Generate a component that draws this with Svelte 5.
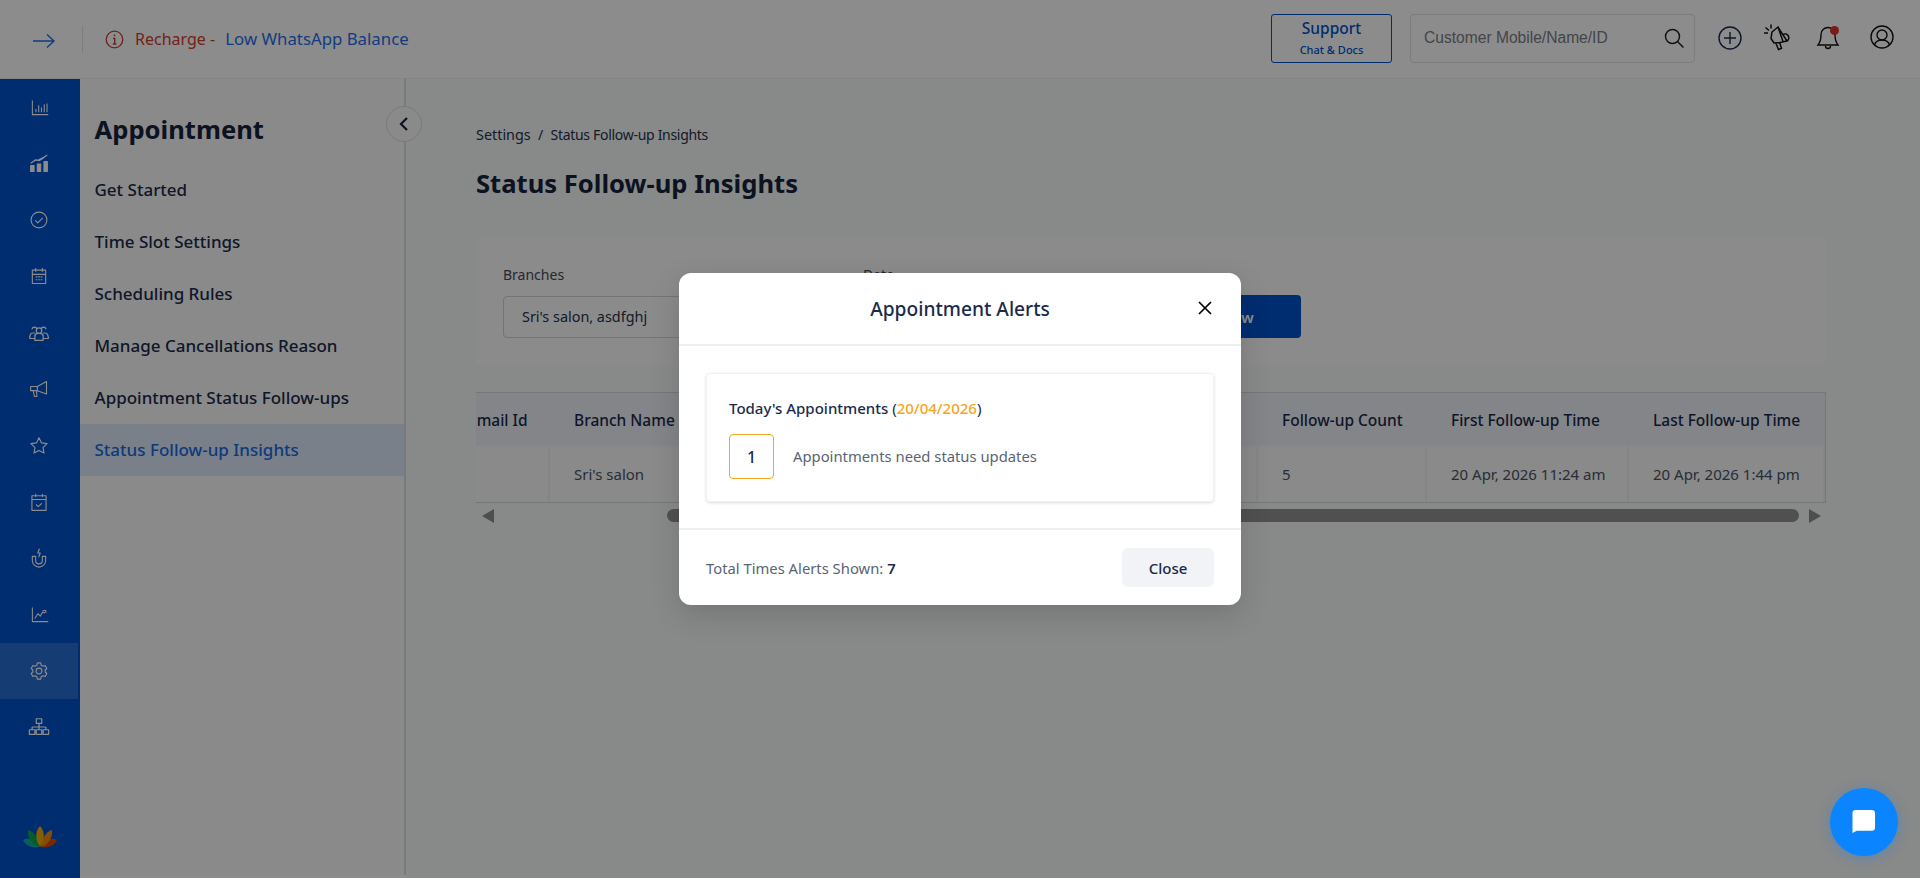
<script>
  const menu = ['Get Started','Time Slot Settings','Scheduling Rules','Manage Cancellations Reason','Appointment Status Follow-ups','Status Follow-up Insights'];
  const rail = [
    {s:19,d:'M3 3v18h20M7.500 18v-4M11 18V9M14.500 18v-6M18 18V8M21.500 18V7'},
    {s:20,d:'M2 11l6-4 4 1 5-3 5-4M2 21v-7h4v7zM10 21v-9h4v9zM18 21V9h4v12z',fill:true},
    {s:20,d:'M12 2.500a9.500 9.500 0 1 0 0 19a9.500 9.500 0 1 0 0-19zM7.500 12.500l3 3 6-6'},
    {s:20,d:'M4 5h16v16H4zM4 10h16M8 2.500V7M16 2.500V7M8 13h2M11 13h2M14 13h2M8 16.500h2M11 16.500h2M14 16.500h2'},
    {s:22,d:'M9 9.500a3 3 0 1 0 6 0a3 3 0 1 0-6 0M7.500 20v-4.500q0-2.500 3-3h3q3 .5 3 3V20zM4.500 8a2.500 2.500 0 0 1 5 0M1.500 18l1-4q.5-2 3-2h2M14.500 8a2.500 2.500 0 0 1 5 0M22.500 18l-1-4q-.5-2-3-2h-2M1.500 18h6M16.500 18h6'},
    {s:20,d:'M2 9h8l11-6v15l-11-4H2zM10 9v5M5 14l1.500 7h3L9 14'},
    {s:20,d:'M12 2l3 6.300 6.700.9-4.900 4.700 1.200 6.600L12 17.400 6 20.500l1.200-6.600-4.900-4.700 6.700-.9z'},
    {s:20,d:'M3.500 4.500h17V22h-17zM3.500 9h17M8 2v4M16 2v4M8.500 15l2.500 2.500 4.500-4'},
    {s:20,d:'M4 10v5a8 8 0 0 0 16 0v-5h-4v5a4 4 0 0 1-8 0v-5zM12.500 1l-2 5h3l-2 5'},
    {s:19,d:'M3 3v18h20M6 17l4-6 3 3 3-5 3 1M16 7h4v3'},
    {s:20,on:true,d:'M12 8.500a3.500 3.500 0 1 0 0 7a3.500 3.500 0 1 0 0-7zM10 2.300h4l.6 2.700 2.200 1.300 2.600-.8 2 3.500-2 1.800v2.400l2 1.800-2 3.500-2.600-.8-2.200 1.300-.6 2.700h-4l-.6-2.700-2.200-1.300-2.600.8-2-3.500 2-1.800v-2.400l-2-1.800 2-3.500 2.600.8 2.200-1.300z'},
    {s:22,d:'M9 3h6v5H9zM12 8v4M4.500 12h15M4.500 12v3M12 12v3M19.500 12v3M1.500 15h6v5h-6zM9 15h6v5H9zM16.500 15h6v5h-6z'}
  ];
</script>

<div class="page">
  <header class="top">
    <button class="arrow" aria-label="Expand">
      <svg width="24" height="16" viewBox="0 0 24 16"><path d="M1 8h21M15 1.500l7 6.500-7 6.500" fill="none" stroke="#1f6fe0" stroke-width="1.400"/></svg>
    </button>
    <span class="sep"></span>
    <svg class="info" width="19" height="19" viewBox="0 0 19 19"><circle cx="9.500" cy="9.500" r="8.300" fill="none" stroke="#c4432f" stroke-width="1.300"/><path d="M9.500 4.500v1.800M8 8.500h1.700V14M7.800 14h3.600" fill="none" stroke="#c4432f" stroke-width="1.400"/></svg>
    <p class="recharge"><span class="red">Recharge&nbsp;-&nbsp;</span><span class="blue">Low WhatsApp Balance</span></p>
    <div class="top-right">
      <button class="support"><b>Support</b><small>Chat &amp; Docs</small></button>
      <div class="search">
        <span>Customer Mobile/Name/ID</span>
        <svg width="22" height="22" viewBox="0 0 22 22"><circle cx="9.500" cy="9.500" r="7" fill="none" stroke="#222" stroke-width="1.500"/><path d="M14.500 14.500l6 6" stroke="#222" stroke-width="1.500"/></svg>
      </div>
      <svg class="i-plus" width="24" height="24" viewBox="0 0 24 24"><circle cx="12" cy="12" r="11" fill="none" stroke="#1a2b4b" stroke-width="1.400"/><path d="M12 6v12M6 12h12" stroke="#1a2b4b" stroke-width="1.400"/></svg>
      <svg class="i-mega" width="28" height="28" viewBox="0 0 28 28"><g fill="none" stroke="#111" stroke-width="1.500"><path d="M9 8l6-5 9 14-7 1.500-6 .5-3-4.500zM15 3l5 14.500M13 19.500l2.500 6 3-1.200-2-6M20 10.500a3.800 3.800 0 0 1 4 6.500M1 9h4M2.500 3.500l3.500 3M8 0.500v4"/></g></svg>
      <span class="bell">
        <svg width="24" height="26" viewBox="0 0 24 26"><path d="M12 2.500a7 7 0 0 0-7 7c0 6-1 8-3 10.500h20c-2-2.500-3-4.500-3-10.500a7 7 0 0 0-7-7zM9.500 21a2.500 2.500 0 0 0 5 0" fill="none" stroke="#111" stroke-width="1.400"/></svg>
        <i></i>
      </span>
      <svg class="i-user" width="24" height="24" viewBox="0 0 24 24"><g fill="none" stroke="#111" stroke-width="1.400"><circle cx="12" cy="12" r="11"/><circle cx="12" cy="10" r="5"/><path d="M4.500 20c1-3.500 3.500-5 7.500-5s6.500 1.500 7.500 5"/></g></svg>
    </div>
  </header>

  <div class="main">
    <nav class="rail">
      {#each rail as r}
        <div class="rail-item" class:active={r.on}>
          <svg width={r.s} height={r.s} viewBox="0 0 24 24"><path d={r.d} fill={r.fill ? '#fff' : 'none'} stroke="#fff" stroke-width="1.350" stroke-linejoin="round"/></svg>
        </div>
      {/each}
      <svg class="lotus" width="34" height="22" viewBox="0 0 34 22">
        <path d="M0 14C6 11 12 14 16 21C8 22 3 20 0 14z" fill="#0fb0a8"/>
        <path d="M5 4C10 5 15 11 16 21C9 19 4 12 5 4z" fill="#0aa850"/>
        <path d="M34 14C28 11 22 14 18 21C26 22 31 20 34 14z" fill="#e0480a"/>
        <path d="M29 4C24 5 19 11 18 21C25 19 30 12 29 4z" fill="#f08a10"/>
        <path d="M17 0C12 5 12 14 17 21C22 14 22 5 17 0z" fill="#f5b000"/>
      </svg>
    </nav>

    <aside class="panel">
      <h2>Appointment</h2>
      <ul>
        {#each menu as m, i}
          <li class:on={i === 5}>{m}</li>
        {/each}
      </ul>
      <button class="collapse" aria-label="Collapse">
        <svg width="12" height="16" viewBox="0 0 12 16"><path d="M9 2L3 8l6 6" fill="none" stroke="#16233b" stroke-width="2.200"/></svg>
      </button>
    </aside>

    <main class="content">
      <div class="crumb"><em>Settings</em>&nbsp; /&nbsp; <span>Status Follow-up Insights</span></div>
      <h1>Status Follow-up Insights</h1>
      <section class="filters">
        <div class="f f1"><span class="lab">Branches</span><div class="input">Sri's salon, asdfghj</div></div>
        <div class="f f2"><span class="lab">Date</span><div class="input"></div></div>
        <button class="show">Show</button>
      </section>
      <div class="tbl">
        <div class="grid">
          <div class="th">Email Id</div><div class="th">Branch Name</div><div class="th">Follow-up Count</div><div class="th">First Follow-up Time</div><div class="th">Last Follow-up Time</div>
          <div class="td"></div><div class="td">Sri's salon</div><div class="td">5</div><div class="td">20 Apr, 2026 11:24 am</div><div class="td">20 Apr, 2026 1:44 pm</div>
        </div>
      </div>
      <div class="sb">
        <i class="al"></i><span class="thumb"></span><i class="ar"></i>
      </div>
    </main>
  </div>

  <div class="backdrop">
    <div class="modal">
      <div class="m-head">
        <h3>Appointment Alerts</h3>
        <button class="x" aria-label="Close"><svg width="14" height="14" viewBox="0 0 14 14"><path d="M1 1l12 12M13 1L1 13" stroke="#000" stroke-width="1.700"/></svg></button>
      </div>
      <div class="m-body">
        <div class="m-card">
          <div class="today">Today's Appointments <span class="paren">(<span class="date">20/04/2026</span>)</span></div>
          <div class="need"><span class="count">1</span><span class="need-t">Appointments need status updates</span></div>
        </div>
      </div>
      <div class="m-foot">
        <span class="total">Total Times Alerts Shown: <b>7</b></span>
        <button class="close">Close</button>
      </div>
    </div>
  </div>

  <button class="chat" aria-label="Chat">
    <svg width="24" height="24" viewBox="0 0 24 24"><path d="M3.500 0h17Q24 0 24 3.500v15q0 3-3.500 3H5L.5 24V3.500Q.5 0 3.500 0z" fill="#fff" transform="scale(.96)"/></svg>
  </button>
</div>

<style>
  :global(body) { margin: 0; background: #fff; }
  .page { height: 878px; display: flex; flex-direction: column; font-family: "Noto Sans", sans-serif; color: #1a2b4b; overflow: hidden; position: relative; }
  button { font-family: inherit; border: 0; background: none; padding: 0; }
  p, h1, h2, h3, ul { margin: 0; padding: 0; }

  .top { height: 78px; flex: none; display: flex; align-items: center; border-bottom: 1px solid #eceff3; background: #fff; }
  .arrow { width: 24px; height: 16px; margin: 4px 0 0 32px; line-height: 0; }
  .sep { width: 1px; height: 27px; background: #e0e3e8; margin-left: 26px; }
  .info { margin-left: 22px; flex: none; }
  .recharge { margin-left: 11px; font-size: 16px; line-height: 22px; }
  .red { color: #d0402c; }
  .blue { color: #1f6fe8; font-size: 16.800px; margin-left: 6px; }
  .top-right { margin-left: auto; display: flex; align-items: center; height: 100%; padding-bottom: 2px; box-sizing: border-box; }
  .support { width: 121px; height: 49px; box-sizing: border-box; border: 1.500px solid #0052cc; border-radius: 3px; color: #0052cc; display: flex; flex-direction: column; align-items: center; justify-content: center; }
  .support b { font-size: 15.500px; font-weight: 500; line-height: 21px; }
  .support small { font-size: 11px; font-weight: 500; line-height: 16px; margin-top: 3px; }
  .search { width: 285px; height: 49px; box-sizing: border-box; margin-left: 18px; border: 1px solid #dfe2e6; border-radius: 4px; display: flex; align-items: center; justify-content: space-between; padding: 0 9px 0 13px; font-family: "Liberation Sans", sans-serif; font-size: 15.600px; color: #7b7f85; }
  .i-plus { margin-left: 23px; }
  .i-mega { margin-left: 21px; }
  .bell { position: relative; margin-left: 25px; height: 26px; line-height: 0; }
  .bell i { position: absolute; top: 1px; right: 1px; width: 9px; height: 9px; border-radius: 50%; background: #e0352b; }
  .i-user { margin: 0 26px 2px 30px; }

  .main { flex: 1; display: flex; min-height: 0; }
  .rail { width: 80px; flex: none; background: #0052cc; position: relative; display: flex; flex-direction: column; }
  .rail-item { display: flex; align-items: center; justify-content: center; width: 78px; height: 56.400px; flex: none; }
  .rail-item.active { background: rgba(255,255,255,.16); }
  .lotus { position: absolute; left: 23px; bottom: 30px; }

  .panel { width: 324px; flex: none; border-right: 2px solid #dcdfe4; position: relative; background: #fbfbfb; margin-bottom: 3px; }
  .panel h2 { font-size: 25.600px; font-weight: 700; line-height: 34px; padding: 34px 0 0 14.500px; color: #16233b; }
  .panel ul { list-style: none; margin-top: 17px; }
  .panel li { height: 52px; line-height: 52px; padding-left: 14.500px; font-size: 17px; font-weight: 500; color: #1a2b4b; }
  .panel li.on { background: #dde9fb; color: #1a6be0; }
  .collapse { position: absolute; left: 306px; top: 27px; width: 36px; height: 36px; border: 1px solid #dcdfe4; border-radius: 50%; background: #fbfbfb; display: flex; align-items: center; justify-content: center; box-sizing: border-box; }

  .content { flex: 1; min-width: 0; padding: 46px 94px 0 70px; background: #f8f9f9; }
  .crumb { font-size: 14px; line-height: 20px; color: #26334d; }
  .crumb em { font-style: normal; font-size: 14.400px; }
  .crumb span { letter-spacing: -.3px; }
  h1 { font-size: 25.600px; font-weight: 700; line-height: 34px; margin-top: 22px; color: #16233b; }
  .filters { margin-top: 36px; height: 130px; background: #fdfdfd; border-radius: 8px; display: flex; align-items: flex-end; padding: 0 0 29px 27px; box-sizing: border-box; }
  .f { display: flex; flex-direction: column; }
  .f1 { width: 340px; }
  .f2 { width: 287px; margin-left: 20px; }
  .lab { font-size: 14px; line-height: 20px; color: #3f4a5c; margin-bottom: 11px; }
  .input { height: 42px; box-sizing: border-box; border: 1px solid #cfd4da; border-radius: 4px; font-size: 14.400px; line-height: 40px; padding-left: 18px; color: #26334d; }
  .show { width: 134px; height: 43px; margin-left: 17px; background: #0052cc; color: #fff; border-radius: 4px; font-size: 15px; font-weight: 600; }

  .tbl { margin-top: 25px; background: #fbfbfb; border: 1px solid #d3d7dd; border-width: 1px 1px 1px 0; overflow: hidden; }
  .grid { display: grid; grid-template-columns: 106px 708px 169px 202px 196px; margin-left: -32px; }
  .th, .td { border-right: 2px solid #f2f3f5; padding-left: 24px; font-size: 15px; display: flex; align-items: center; box-sizing: border-box; white-space: nowrap; }
  .th { height: 54px; background: #f0f3f9; font-size: 15.500px; font-weight: 500; color: #1a2b4b; border-bottom: 2px solid #f5f6f8; padding-top: 2px; }
  .td { height: 55px; color: #4a5465; padding-bottom: 1px; }
  .sb { height: 14px; margin-top: 6px; position: relative; }
  .thumb { position: absolute; left: 191px; width: 1132px; top: 0; height: 13px; background: #929292; border-radius: 7px; }
  .al, .ar { position: absolute; top: 0; width: 0; height: 0; border-style: solid; border-color: transparent; border-width: 7px 0; }
  .al { left: 6px; border-right: 12px solid #8f8f8f; }
  .ar { left: 1333px; border-left: 12px solid #8f8f8f; }

  .backdrop { position: absolute; inset: 0; background: rgba(0,0,0,.45); display: flex; align-items: center; justify-content: center; }
  .modal { width: 562px; height: 332px; box-sizing: border-box; background: #fff; border-radius: 12px; display: flex; flex-direction: column; box-shadow: 0 10px 30px rgba(0,0,0,.15); }
  .m-head { height: 73px; flex: none; box-sizing: border-box; border-bottom: 2px solid #eef0f4; display: flex; align-items: center; justify-content: center; position: relative; }
  h3 { font-size: 19.200px; font-weight: 500; line-height: 26px; color: #1a2b4b; }
  .x { position: absolute; right: 29px; top: 28px; width: 14px; height: 14px; line-height: 0; }
  .m-body { height: 184px; flex: none; box-sizing: border-box; padding: 27px 27px 0; border-bottom: 2px solid #eef0f4; }
  .m-card { height: 129px; box-sizing: border-box; border: 1px solid #f0f1f3; border-radius: 4px; box-shadow: 0 1px 3px rgba(0,0,0,.14); padding: 24px 22px; }
  .today { font-size: 15px; line-height: 20px; font-weight: 500; color: #1a2b4b; }
  .paren { font-weight: 400; }
  .date { color: #f5a623; font-weight: 500; }
  .need { display: flex; align-items: center; margin-top: 16px; }
  .count { width: 45px; height: 45px; box-sizing: border-box; border: 1px solid #f5a623; border-radius: 4px; display: flex; align-items: center; justify-content: center; font-size: 16px; font-weight: 500; }
  .need-t { margin-left: 19px; font-size: 14.800px; color: #5a6475; padding-bottom: 2px; }
  .m-foot { flex: 1; display: flex; align-items: center; justify-content: space-between; padding: 0 27px; }
  .total { font-size: 14.800px; color: #5a6475; }
  .total b { color: #1a2b4b; font-weight: 600; }
  .close { width: 92px; height: 39px; background: #f1f3f7; border-radius: 6px; font-size: 15px; font-weight: 500; color: #1a2b4b; }

  .chat { position: absolute; left: 1830px; top: 788px; width: 68px; height: 68px; border-radius: 50%; background: #0a84ff; display: flex; align-items: center; justify-content: center; box-shadow: 0 2px 12px rgba(10,132,255,.35); }
</style>
